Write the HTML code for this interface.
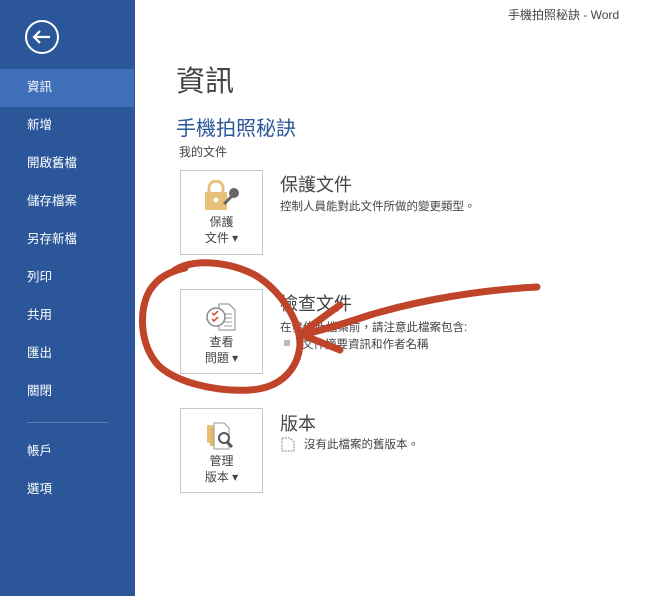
<!DOCTYPE html>
<html><head><meta charset="utf-8"><style>
*{margin:0;padding:0;box-sizing:border-box}
body{width:668px;height:596px;overflow:hidden;background:#fff;font-family:"Liberation Sans","Noto Sans CJK TC",sans-serif;position:relative;color:#444}
#side{position:absolute;left:0;top:0;width:135px;height:596px;background:#2b579a}
.it{position:absolute;left:27px;color:#fff;font-size:12.5px;line-height:16px}
.sel{position:absolute;left:0;top:69px;width:134px;height:38px;background:#3e6fb8}
.sep{position:absolute;left:27px;top:422px;width:81px;height:1px;background:#5b7fb8}
.t{position:absolute;white-space:nowrap}
.box{position:absolute;left:180px;width:83px;height:85px;border:1px solid #c6c6c6;background:#fff}
.bl{position:absolute;left:0;width:100%;text-align:center;font-size:12px;line-height:16px;color:#444}
</style></head><body>
<div id="side">
<svg style="position:absolute;left:24px;top:19px" width="36" height="36" viewBox="0 0 36 36"><circle cx="18" cy="18" r="16" fill="none" stroke="#fff" stroke-width="2"/><path d="M10 18h16M16 12l-6 6 6 6" fill="none" stroke="#fff" stroke-width="2.2"/></svg>
<div class="sel"></div>
<div class="it" style="top:79px">資訊</div>
<div class="it" style="top:117px">新增</div>
<div class="it" style="top:155px">開啟舊檔</div>
<div class="it" style="top:193px">儲存檔案</div>
<div class="it" style="top:231px">另存新檔</div>
<div class="it" style="top:269px">列印</div>
<div class="it" style="top:307px">共用</div>
<div class="it" style="top:345px">匯出</div>
<div class="it" style="top:383px">關閉</div>
<div class="sep"></div>
<div class="it" style="top:443px">帳戶</div>
<div class="it" style="top:481px">選項</div>
</div>
<div class="t" style="left:508px;top:6px;font-size:12px;color:#444">手機拍照秘訣 - Word</div>
<div class="t" style="left:176px;top:58px;font-size:29px;color:#444">資訊</div>
<div class="t" style="left:176px;top:112px;font-size:20px;color:#2b579a">手機拍照秘訣</div>
<div class="t" style="left:179px;top:143px;font-size:12px;color:#444">我的文件</div>

<div class="box" style="top:170px">
<svg style="position:absolute;left:22px;top:9px" width="38" height="32" viewBox="0 0 38 32"><path d="M6 12V8a7 7 0 0 1 14 0v4" fill="none" stroke="#e9c07a" stroke-width="3"/><rect x="2" y="12" width="22" height="18" fill="#e9c07a"/><circle cx="13" cy="20" r="2.5" fill="#fff"/><path d="M21 24l9-9" stroke="#666" stroke-width="3"/><circle cx="31" cy="13" r="5" fill="#666"/></svg>
<div class="bl" style="top:43px">保護</div><div class="bl" style="top:59px">文件 ▾</div></div>
<div class="t" style="left:280px;top:171px;font-size:18px;color:#444">保護文件</div>
<div class="t" style="left:280px;top:198px;font-size:11.5px;color:#444">控制人員能對此文件所做的變更類型。</div>

<div class="box" style="top:289px">
<svg style="position:absolute;left:24px;top:12px" width="34" height="30" viewBox="0 0 34 30"><path d="M14 2h10l6 6v20H14z" fill="#fff" stroke="#888"/><path d="M19 12h8M19 16h8M19 20h8M19 24h8" stroke="#999"/><circle cx="11" cy="15" r="9" fill="#fff" stroke="#888" stroke-width="1.5"/><path d="M7 11l2 2 4-4M7 17l2 2 4-4" stroke="#d24726" stroke-width="1.5" fill="none"/></svg>
<div class="bl" style="top:44px">查看</div><div class="bl" style="top:60px">問題 ▾</div></div>
<div class="t" style="left:280px;top:290px;font-size:18px;color:#444">檢查文件</div>
<div class="t" style="left:280px;top:319px;font-size:11.5px;color:#444">在發佈此檔案前，請注意此檔案包含:</div>
<div class="t" style="left:284px;top:340px;width:6px;height:6px;background:#bbb"></div>
<div class="t" style="left:302px;top:336px;font-size:11.5px;color:#444">文件摘要資訊和作者名稱</div>

<div class="box" style="top:408px">
<svg style="position:absolute;left:24px;top:12px" width="34" height="30" viewBox="0 0 34 30"><rect x="2" y="4" width="12" height="18" fill="#e9c07a"/><rect x="5" y="7" width="12" height="18" fill="#e9b85e"/><path d="M9 2h10l5 5v21H9z" fill="#fff" stroke="#999"/><circle cx="19" cy="17" r="5" fill="#fff" stroke="#555" stroke-width="2"/><path d="M22 21l5 5" stroke="#555" stroke-width="3"/></svg>
<div class="bl" style="top:44px">管理</div><div class="bl" style="top:60px">版本 ▾</div></div>
<div class="t" style="left:280px;top:410px;font-size:18px;color:#444">版本</div>
<svg style="position:absolute;left:281px;top:437px" width="14" height="15"><path d="M1 1h8l4 4v9H1z" fill="none" stroke="#888" stroke-dasharray="2 1"/></svg>
<div class="t" style="left:304px;top:436px;font-size:11.5px;color:#444">沒有此檔案的舊版本。</div>

<svg style="position:absolute;left:0;top:0" width="668" height="596" viewBox="0 0 668 596"><g fill="none" stroke="#c0442a" stroke-width="7" stroke-linecap="round" stroke-linejoin="round">
<path d="M175 270C195 258 230 262 255 275C280 290 300 320 300 345C298 368 282 388 250 390C215 392 175 382 158 365C140 345 138 310 150 290C158 278 168 272 185 268"/>
<path d="M537 287C480 290 420 300 370 315C340 325 315 332 300 335"/>
<path d="M340 305L300 334L340 350"/>
</g></svg>
</body></html>
